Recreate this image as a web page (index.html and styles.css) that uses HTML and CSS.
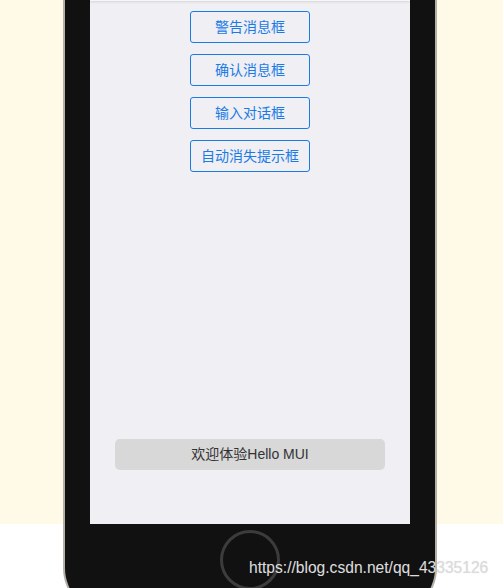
FILE: index.html
```html
<!DOCTYPE html>
<html lang="zh-CN">
<head>
<meta charset="utf-8">
<title>Hello MUI</title>
<link rel="stylesheet" href="styles.css">
</head>
<body>
<div class="phone">
  <div class="screen">
    <div class="bar"></div>
    <div class="btns">
      <button class="btn">警告消息框</button>
      <button class="btn">确认消息框</button>
      <button class="btn">输入对话框</button>
      <button class="btn">自动消失提示框</button>
    </div>
    <div class="welcome">欢迎体验Hello MUI</div>
  </div>
  <div class="chin">
    <div class="home"></div>
  </div>
</div>
<div class="watermark">https://blog.csdn.net/qq_43335126</div>
</body>
</html>
```
FILE: styles.css
```css
html, body {
  margin: 0;
  padding: 0;
  height: 100%;
  overflow: hidden;
}
body {
  background: linear-gradient(#fffae8 0, #fffae8 524px, #ffffff 524px);
  font-family: "Liberation Sans", "Noto Sans CJK SC", sans-serif;
  position: relative;
}
.phone {
  width: 320px;
  margin: 0 auto 0 63px;
  border: 2px solid #b4b0a8;
  border-top: 0;
  background: #111111;
  padding: 0 25px;
  border-radius: 0 0 48px 48px;
  display: flex;
  flex-direction: column;
}
.screen {
  height: 524px;
  background: #efeff4;
  display: flex;
  flex-direction: column;
}
.bar {
  height: 1px;
  background: #f7f7f7;
  box-shadow: 0 0 3px rgba(0, 0, 0, 0.35);
}
.btns {
  display: flex;
  flex-direction: column;
  align-items: center;
  gap: 11px;
  padding-top: 10px;
}
.btn {
  width: 120px;
  height: 32px;
  box-sizing: border-box;
  border: 1px solid #1a7be6;
  border-radius: 3px;
  background: transparent;
  color: #1a7be6;
  font-family: "Liberation Sans", "Noto Sans CJK SC", sans-serif;
  font-size: 14px;
  padding: 0;
  line-height: 30px;
}
.welcome {
  margin: auto 25px 54px 25px;
  height: 31px;
  line-height: 31px;
  background: #d8d8d8;
  border-radius: 5px;
  color: #333333;
  font-size: 14px;
  text-align: center;
}
.chin {
  height: 84px;
  display: flex;
  justify-content: center;
  padding-top: 6px;
}
.home {
  width: 54px;
  height: 54px;
  border: 3px solid #3c3c3c;
  border-radius: 50%;
}
.watermark {
  position: absolute;
  left: 249px;
  top: 559px;
  font-family: "Liberation Sans", Arial, sans-serif;
  font-size: 15.6px;
  color: #dcdcdc;
  text-shadow: 0 0 1px rgba(120, 120, 120, 0.25);
  white-space: nowrap;
}
```
